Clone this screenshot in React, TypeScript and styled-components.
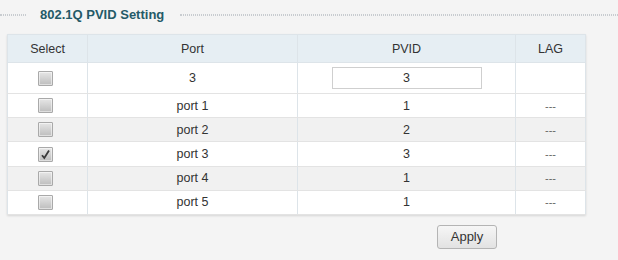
import React from "react";
import styled, { createGlobalStyle } from "styled-components";

const GlobalStyle = createGlobalStyle`
  html, body {
    margin: 0;
    padding: 0;
    background: #f4f4f4;
  }
  body {
    font-family: "Liberation Sans", Arial, sans-serif;
    color: #333;
  }
`;

const Page = styled.div`
  width: 618px;
  height: 260px;
  overflow: hidden;
  background: #f4f4f4;
`;

const TitleBar = styled.div`
  display: flex;
  align-items: center;
  height: 28px;
`;

const Dots = styled.div<{ $width?: number }>`
  height: 0;
  margin-top: 1px;
  flex: ${(p) => (p.$width ? `0 0 ${p.$width}px` : "1")};
  border-top: 1px dotted #c8ccd0;
  border-bottom: 1px dotted #c8ccd0;
`;

const Title = styled.h2`
  margin: 0;
  padding: 0 16px 0 14px;
  font-size: 13px;
  font-weight: bold;
  color: #245a68;
  white-space: nowrap;
`;

const TableWrap = styled.div`
  margin: 6px 0 0 7px;
  width: 579px;
  box-shadow: 0 1px 2px rgba(0, 0, 0, 0.12);
`;

const Grid = styled.table`
  width: 579px;
  border-collapse: collapse;
  table-layout: fixed;
  font-size: 12.5px;
  background: #fff;
  border: 1px solid #dde4e9;
`;

const Col = styled.col<{ $width?: number }>`
  width: ${(p) => (p.$width ? `${p.$width}px` : "auto")};
`;

const HeadCell = styled.th`
  height: 27px;
  padding: 0;
  font-weight: normal;
  color: #333;
  background: #e6eef3;
  border: 1px solid #dde4e9;
  text-align: center;
`;

const Row = styled.tr<{ $shade?: boolean }>`
  background: ${(p) => (p.$shade ? "#f1f1f1" : "#fff")};
`;

const Cell = styled.td<{ $tall?: boolean; $muted?: boolean }>`
  height: ${(p) => (p.$tall ? "30px" : "23.2px")};
  padding: 0;
  text-align: center;
  color: ${(p) => (p.$muted ? "#666" : "#333")};
  font-size: ${(p) => (p.$muted ? "11px" : "inherit")};
  border-left: 1px solid #dde4e9;
  border-right: 1px solid #dde4e9;
  border-bottom: 1px solid #e3e3e3;
`;

const Box = styled.span`
  display: inline-flex;
  align-items: center;
  justify-content: center;
  width: 13px;
  height: 13px;
  margin-left: -4px;
  vertical-align: middle;
  border: 1px solid #a9a9a9;
  border-radius: 1px;
  background: linear-gradient(#e6e6e6, #bdbdbd);
  box-shadow: inset 0 0 0 1px rgba(255, 255, 255, 0.5);
`;

const PvidInput = styled.input`
  box-sizing: border-box;
  width: 150px;
  height: 22px;
  border: 1px solid #cfcfcf;
  background: #fff;
  text-align: center;
  font-family: inherit;
  font-size: 12.5px;
  color: #333;
  padding: 0;
  outline: none;
`;

const Footer = styled.div`
  display: flex;
  padding: 10px 0 0 437px;
`;

const Button = styled.button`
  width: 60px;
  height: 24px;
  border: 1px solid #b4b4b4;
  border-radius: 3px;
  background: linear-gradient(#f6f6f6, #e2e2e2);
  font-family: inherit;
  font-size: 13px;
  color: #333;
  padding: 0;
`;

const Check = () => (
  <svg width="11" height="11" viewBox="0 0 11 11">
    <path d="M2 6.2 L4.3 9 L9 1.5" fill="none" stroke="#3a3a3a" strokeWidth="1.8" />
  </svg>
);

type PortRow = { port: string; pvid: number; lag: string; checked?: boolean };

const rows: PortRow[] = [
  { port: "port 1", pvid: 1, lag: "---" },
  { port: "port 2", pvid: 2, lag: "---" },
  { port: "port 3", pvid: 3, lag: "---", checked: true },
  { port: "port 4", pvid: 1, lag: "---" },
  { port: "port 5", pvid: 1, lag: "---" },
];

const App = () => {
  return (
    <Page>
      <GlobalStyle />
      <TitleBar>
        <Dots $width={26} />
        <Title>802.1Q PVID Setting</Title>
        <Dots />
      </TitleBar>
      <TableWrap>
        <Grid>
          <colgroup>
            <Col $width={80} />
            <Col $width={210} />
            <Col $width={218} />
            <Col />
          </colgroup>
          <thead>
            <tr>
              <HeadCell>Select</HeadCell>
              <HeadCell>Port</HeadCell>
              <HeadCell>PVID</HeadCell>
              <HeadCell>LAG</HeadCell>
            </tr>
          </thead>
          <tbody>
            <Row>
              <Cell $tall>
                <Box />
              </Cell>
              <Cell $tall>3</Cell>
              <Cell $tall>
                <PvidInput defaultValue="3" />
              </Cell>
              <Cell $tall />
            </Row>
            {rows.map((r, i) => (
              <Row key={r.port} $shade={i % 2 === 1}>
                <Cell>
                  <Box>{r.checked && <Check />}</Box>
                </Cell>
                <Cell>{r.port}</Cell>
                <Cell>{r.pvid}</Cell>
                <Cell $muted>{r.lag}</Cell>
              </Row>
            ))}
          </tbody>
        </Grid>
      </TableWrap>
      <Footer>
        <Button>Apply</Button>
      </Footer>
    </Page>
  );
};

export default App;
